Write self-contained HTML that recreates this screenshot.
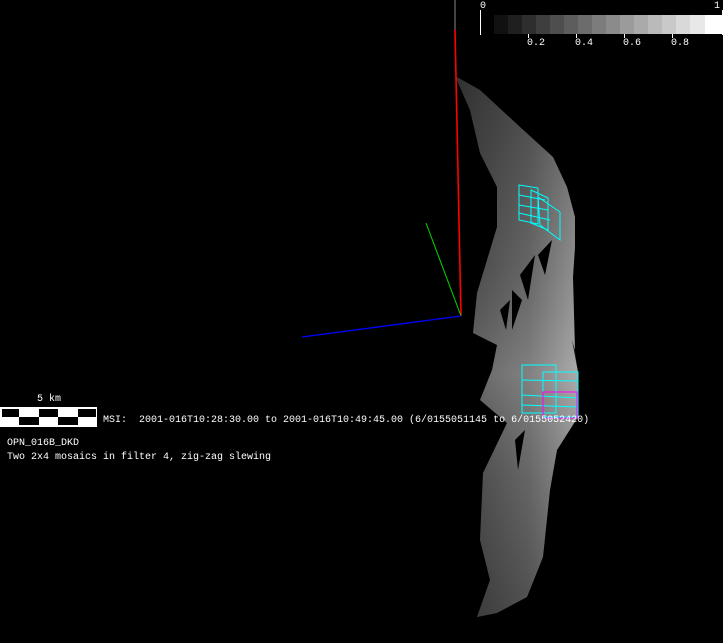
<!DOCTYPE html>
<html><head><meta charset="utf-8"><style>
html,body{margin:0;padding:0;background:#000;width:723px;height:643px;overflow:hidden;position:relative}
.t{position:absolute;color:#fff;font-family:"Liberation Mono",monospace;font-size:10px;white-space:pre;line-height:12px}
</style></head><body>
<svg width="723" height="643" style="position:absolute;left:0;top:0">
<defs>
<linearGradient id="g" x1="0" y1="0" x2="1" y2="0">
<stop offset="0" stop-color="#4a4a4a"/><stop offset="0.6" stop-color="#707070"/><stop offset="1" stop-color="#a0a0a0"/>
</linearGradient>
<linearGradient id="v" x1="0" y1="0" x2="0" y2="1">
<stop offset="0" stop-color="#000" stop-opacity="0.35"/><stop offset="0.35" stop-color="#000" stop-opacity="0.1"/>
<stop offset="0.55" stop-color="#fff" stop-opacity="0.12"/><stop offset="0.75" stop-color="#000" stop-opacity="0.1"/><stop offset="1" stop-color="#000" stop-opacity="0.3"/>
</linearGradient>
</defs>
<path d="M455,76 L480,90 L520,127 L553,157 L567,187 L575,217 L575,247 L573,277 L575,350 L572,340 L578,372 L578,417 L557,450 L550,490 L543,557 L527,597 L497,613 L477,617 L490,580 L480,540 L483,473 L507,423 L480,400 L492,370 L497,345 L473,333 L477,293 L487,260 L497,227 L497,187 L480,153 L470,110 Z" fill="url(#g)"/>
<path d="M455,76 L480,90 L520,127 L553,157 L567,187 L575,217 L575,247 L573,277 L575,350 L578,372 L578,417 L557,450 L550,490 L543,557 L527,597 L497,613 L477,617 L490,580 L480,540 L483,473 L507,423 L480,400 L492,370 L497,345 L473,333 L477,293 L487,260 L497,227 L497,187 L480,153 L470,110 Z" fill="url(#v)"/>
<path d="M520,275 L535,255 L528,300 Z M512,290 L522,300 L512,330 Z M538,255 L552,240 L545,275 Z M500,310 L510,300 L506,330 Z M515,440 L525,430 L518,470 Z" fill="#000"/>
<line x1="455" y1="0" x2="455" y2="30" stroke="#888" stroke-width="1"/>
<line x1="455" y1="30" x2="461" y2="316" stroke="#f00" stroke-width="1.6"/>
<line x1="426" y1="223" x2="461" y2="316" stroke="#0d0" stroke-width="1"/>
<line x1="302" y1="337" x2="461" y2="316" stroke="#00f" stroke-width="1.3"/>
<g fill="none" stroke="#0ff" stroke-width="1">
<path d="M519,185 L538,188 L538,224 L519,220 Z"/>
<path d="M531,190 L548,198 L548,230 L531,223 Z"/>
<path d="M538,197 L560,212 L560,240 L540,225 Z"/>
<path d="M519,195 L545,200 M519,205 L548,210 M519,213 L550,220"/>
<rect x="522" y="365" width="34" height="48"/><rect x="543" y="372" width="35" height="45"/>
<line x1="522" y1="380" x2="578" y2="381"/><line x1="522" y1="395" x2="578" y2="398"/><line x1="522" y1="405" x2="578" y2="407"/>
</g>
<rect x="543" y="392" width="34" height="26" fill="none" stroke="#f0f" stroke-width="1"/>
<g>
<rect x="494" y="15" width="14" height="19" fill="#111"/><rect x="508" y="15" width="14" height="19" fill="#1f1f1f"/>
<rect x="522" y="15" width="14" height="19" fill="#2e2e2e"/><rect x="536" y="15" width="14" height="19" fill="#3e3e3e"/>
<rect x="550" y="15" width="14" height="19" fill="#4e4e4e"/><rect x="564" y="15" width="14" height="19" fill="#5d5d5d"/>
<rect x="578" y="15" width="14" height="19" fill="#6c6c6c"/><rect x="592" y="15" width="14" height="19" fill="#7c7c7c"/>
<rect x="606" y="15" width="14" height="19" fill="#8b8b8b"/><rect x="620" y="15" width="14" height="19" fill="#9b9b9b"/>
<rect x="634" y="15" width="14" height="19" fill="#aaa"/><rect x="648" y="15" width="14" height="19" fill="#bababa"/>
<rect x="662" y="15" width="14" height="19" fill="#c9c9c9"/><rect x="676" y="15" width="14" height="19" fill="#d9d9d9"/>
<rect x="690" y="15" width="15" height="19" fill="#e8e8e8"/><rect x="705" y="15" width="17" height="19" fill="#fff"/>
</g>
<line x1="480.5" y1="10" x2="480.5" y2="35" stroke="#fff"/>
<line x1="722.5" y1="10" x2="722.5" y2="35" stroke="#fff"/>
<g stroke="#fff"><line x1="528.5" y1="34" x2="528.5" y2="38"/><line x1="576.5" y1="34" x2="576.5" y2="38"/><line x1="624.5" y1="34" x2="624.5" y2="38"/><line x1="672.5" y1="34" x2="672.5" y2="38"/></g>
<rect x="0.5" y="407.5" width="96" height="19" fill="#fff" stroke="#fff"/>
<g fill="#000">
<rect x="2" y="409" width="17" height="8"/><rect x="39" y="409" width="19" height="8"/><rect x="78" y="409" width="18" height="8"/>
<rect x="19" y="417" width="20" height="8"/><rect x="58" y="417" width="20" height="8"/>
</g>
</svg>
<div class="t" style="left:480px;top:1px">0</div>
<div class="t" style="left:714px;top:1px">1</div>
<div class="t" style="left:527px;top:38px">0.2</div>
<div class="t" style="left:575px;top:38px">0.4</div>
<div class="t" style="left:623px;top:38px">0.6</div>
<div class="t" style="left:671px;top:38px">0.8</div>
<div class="t" style="left:37px;top:394px">5 km</div>
<div class="t" style="left:103px;top:415px">MSI:  2001-016T10:28:30.00 to 2001-016T10:49:45.00 (6/0155051145 to 6/0155052420)</div>
<div class="t" style="left:7px;top:438px">OPN_016B_DKD</div>
<div class="t" style="left:7px;top:452px">Two 2x4 mosaics in filter 4, zig-zag slewing</div>
</body></html>
